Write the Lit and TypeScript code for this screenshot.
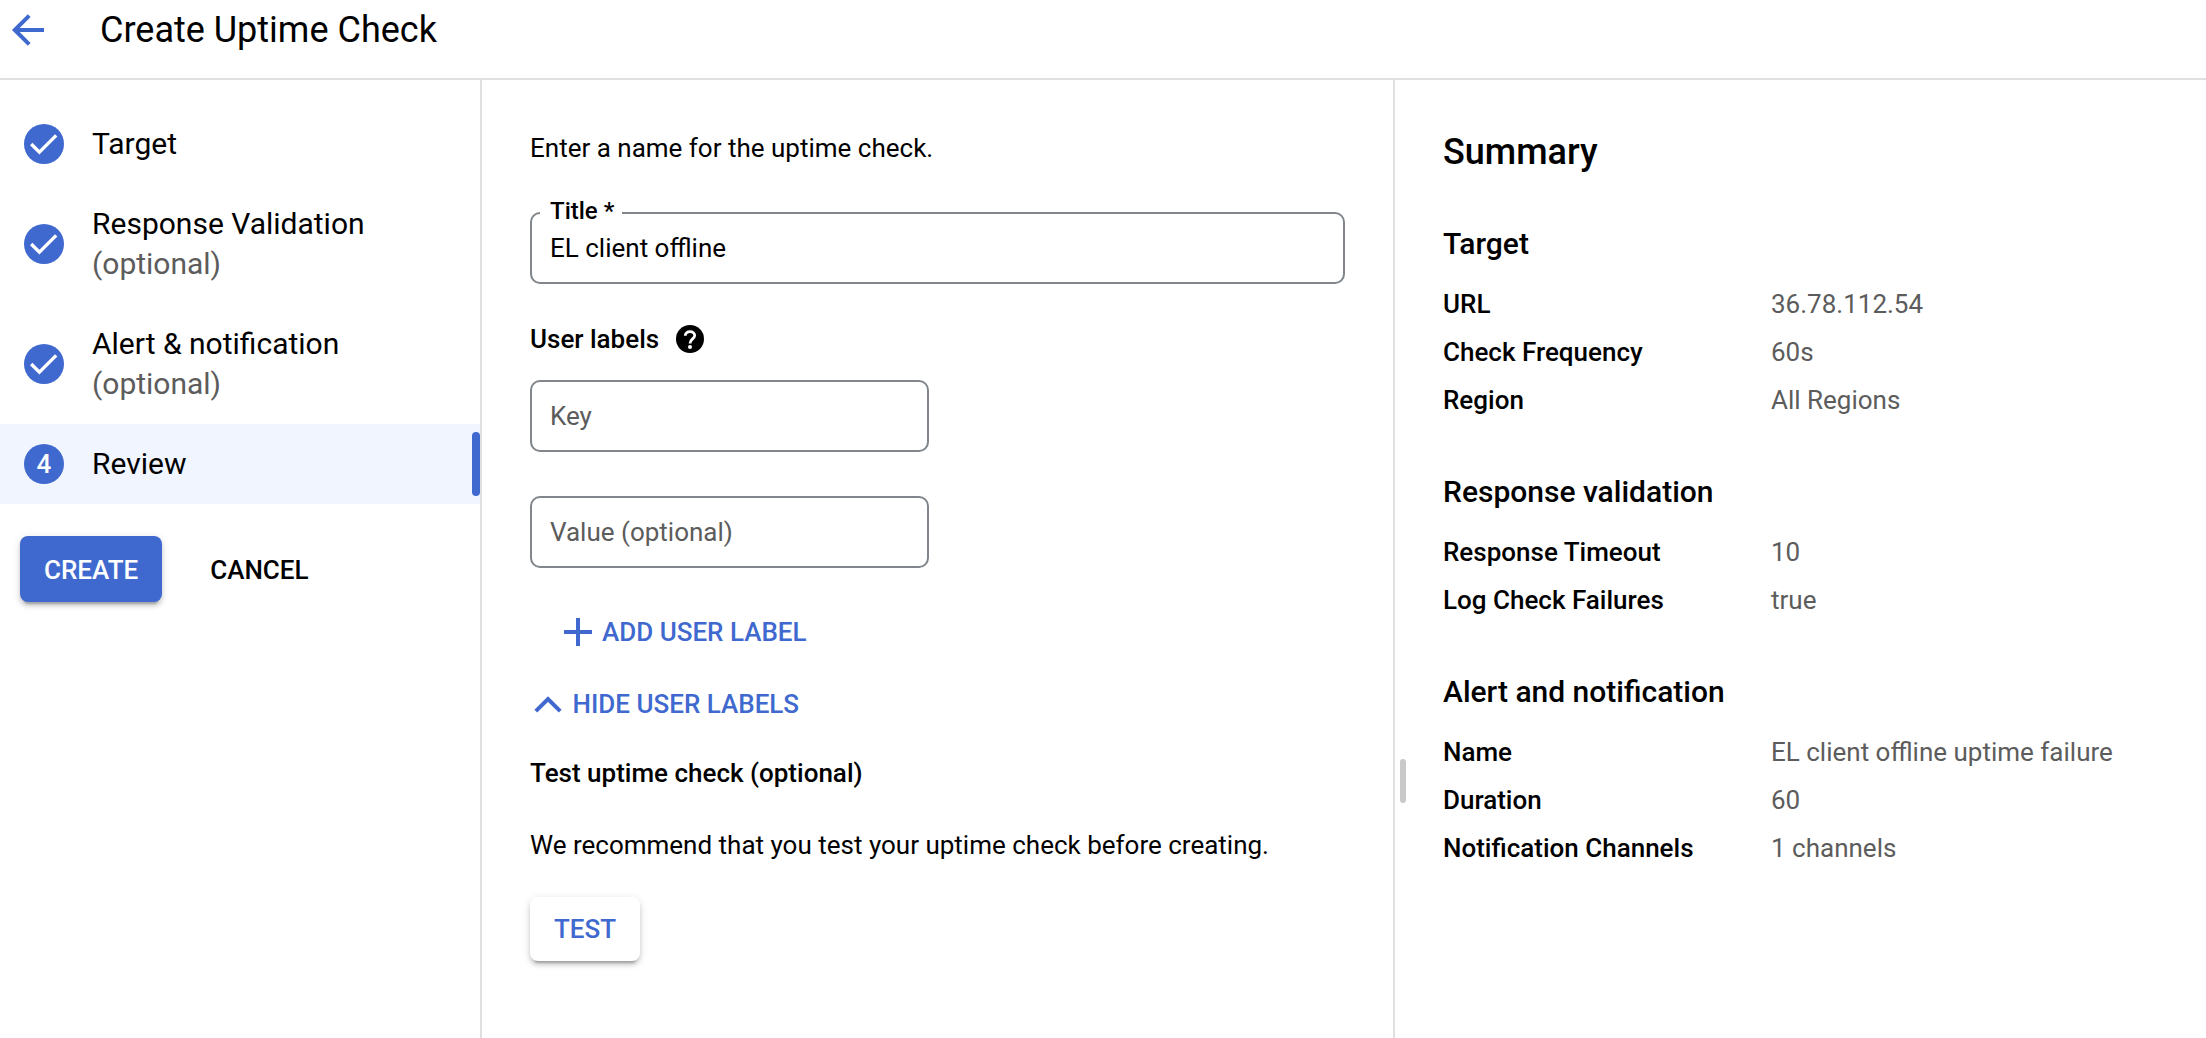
import { LitElement, html, css } from "lit";
import { customElement, property } from "lit/decorators.js";

const BLUE = "#3f69cf";

interface Step {
  label: string;
  optional?: boolean;
  done: boolean;
}

const steps: Step[] = [
  { label: "Target", done: true },
  { label: "Response Validation", optional: true, done: true },
  { label: "Alert & notification", optional: true, done: true },
  { label: "Review", done: false },
];

const sections: { heading: string; rows: [string, string][] }[] = [
  {
    heading: "Target",
    rows: [
      ["URL", "36.78.112.54"],
      ["Check Frequency", "60s"],
      ["Region", "All Regions"],
    ],
  },
  {
    heading: "Response validation",
    rows: [
      ["Response Timeout", "10"],
      ["Log Check Failures", "true"],
    ],
  },
  {
    heading: "Alert and notification",
    rows: [
      ["Name", "EL client offline uptime failure"],
      ["Duration", "60"],
      ["Notification Channels", "1 channels"],
    ],
  },
];

@customElement("outlined-field")
class OutlinedField extends LitElement {
  @property() label = "";
  @property() value = "";
  @property() placeholder = "";

  static styles = css`
    :host {
      display: block;
    }
    .box {
      box-sizing: border-box;
      height: 72px;
      margin: 0;
      padding: 0 18px;
      border: 2px solid #80868b;
      border-radius: 10px;
      position: relative;
      display: flex;
      align-items: center;
      color: #000;
    }
    .label {
      position: absolute;
      left: 8px;
      top: -19px;
      padding: 0 8px 0 10px;
      background: #fff;
      font-size: 24px;
      line-height: 32px;
      font-weight: 500;
    }
    .hint {
      color: #5c5c5c;
    }
    .value {
      line-height: 36px;
    }
  `;

  render() {
    return html`<div class="box">
      ${this.label ? html`<span class="label">${this.label}</span>` : null}
      ${this.value
        ? html`<span class="value">${this.value}</span>`
        : html`<span class="hint">${this.placeholder}</span>`}
    </div>`;
  }
}

@customElement("app-root")
class AppRoot extends LitElement {
  static styles = css`
    :host {
      display: flex;
      flex-direction: column;
      height: 1038px;
      overflow: hidden;
      background: #fff;
      color: #000;
      font-family: Roboto, "Liberation Sans", sans-serif;
      font-size: 26px;
      line-height: 40px;
    }
    svg {
      display: block;
      flex: none;
    }
    .header {
      box-sizing: border-box;
      height: 80px;
      flex: none;
      border-bottom: 2px solid #e0e0e0;
      display: flex;
      align-items: flex-start;
      padding: 6px 4px;
      gap: 48px;
    }
    .title {
      margin: 0;
      font-size: 36px;
      line-height: 48px;
      font-weight: 400;
    }
    .body {
      flex: 1;
      display: grid;
      grid-template-columns: 482px 911px 1fr;
    }
    .side {
      border-right: 2px solid #e0e0e0;
      padding-top: 24px;
    }
    .step {
      display: flex;
      align-items: center;
      gap: 28px;
      padding: 20px 24px;
      font-size: 30px;
      position: relative;
    }
    .step.active {
      background: #f0f5ff;
    }
    .step.active::after {
      content: "";
      position: absolute;
      right: 0;
      top: 8px;
      bottom: 8px;
      width: 8px;
      border-radius: 4px;
      background: #3f69cf;
    }
    .num {
      width: 40px;
      height: 40px;
      border-radius: 50%;
      background: #3f69cf;
      color: #fff;
      font-size: 26px;
      font-weight: 500;
      text-align: center;
    }
    .opt {
      color: #5c5c5c;
    }
    .actions {
      display: flex;
      gap: 24px;
      padding: 32px 20px;
    }
    .btn {
      box-sizing: border-box;
      height: 66px;
      padding: 0 24px;
      border-radius: 8px;
      font-weight: 500;
      display: flex;
      align-items: center;
    }
    .actions .btn {
      padding-top: 2px;
    }
    .primary {
      background: #3f69cf;
      color: #fff;
      box-shadow: 0 6px 2px -4px rgba(0, 0, 0, 0.2), 0 4px 4px rgba(0, 0, 0, 0.14), 0 2px 10px rgba(0, 0, 0, 0.12);
    }
    .raised {
      width: fit-content;
      height: 64px;
      margin-top: 32px;
      color: #3f69cf;
      background: #fff;
      box-shadow: 0 6px 2px -4px rgba(0, 0, 0, 0.2), 0 4px 4px rgba(0, 0, 0, 0.14), 0 2px 10px rgba(0, 0, 0, 0.12);
    }
    .main {
      padding: 48px 48px 0;
      display: flex;
      flex-direction: column;
    }
    .text {
      margin: 0;
    }
    .name-field {
      margin-top: 44px;
    }
    .labels {
      display: flex;
      align-items: center;
      gap: 17px;
      margin-top: 35px;
      font-weight: 500;
    }
    .key {
      width: 399px;
      margin-top: 21px;
    }
    .val {
      width: 399px;
      margin-top: 44px;
    }
    .link {
      display: flex;
      align-items: center;
      color: #3f69cf;
      font-weight: 500;
    }
    .add {
      margin-top: 44px;
      padding-left: 34px;
      gap: 10px;
    }
    .hide {
      margin-top: 32px;
      padding-left: 4px;
      gap: 10.5px;
    }
    .test-heading {
      margin: 29px 0 32px;
      font-size: 26px;
      font-weight: 500;
    }
    .summary {
      border-left: 2px solid #e0e0e0;
      padding: 48px 48px 0;
      position: relative;
    }
    .summary-title {
      margin: 0;
      font-size: 36px;
      line-height: 48px;
      font-weight: 500;
    }
    .section {
      margin-top: 48px;
    }
    .heading {
      margin: 0 0 16px;
      font-size: 30px;
      line-height: 40px;
      font-weight: 500;
    }
    .row {
      display: grid;
      grid-template-columns: 328px 1fr;
      line-height: 48px;
    }
    .key-name {
      font-weight: 500;
    }
    .key-value {
      color: #5c5c5c;
    }
    .handle {
      position: absolute;
      left: 5px;
      top: 679px;
      width: 6px;
      height: 44px;
      border-radius: 3px;
      background: #c9c9c9;
    }
  `;

  private renderStep(step: Step, index: number) {
    return html`<div class="step ${step.done ? "" : "active"}">
      ${step.done
        ? html`<svg width="40" height="40" viewBox="0 0 40 40">
            <circle cx="20" cy="20" r="20" fill=${BLUE} />
            <path d="M7.2 20L15.4 28.2L32.2 11.4" fill="none" stroke="#fff" stroke-width="3.4" />
          </svg>`
        : html`<span class="num">${index + 1}</span>`}
      <div>
        <div>${step.label}</div>
        ${step.optional ? html`<div class="opt">(optional)</div>` : null}
      </div>
    </div>`;
  }

  render() {
    return html`
      <header class="header">
        <svg width="48" height="48" viewBox="0 0 48 48">
          <path d="M40 24H11M25.2 9.6L10.8 24L25.2 38.4" fill="none" stroke=${BLUE} stroke-width="4" />
        </svg>
        <h1 class="title">Create Uptime Check</h1>
      </header>
      <div class="body">
        <nav class="side">
          ${steps.map((s, i) => this.renderStep(s, i))}
          <div class="actions">
            <div class="btn primary">CREATE</div>
            <div class="btn">CANCEL</div>
          </div>
        </nav>
        <main class="main">
          <p class="text">Enter a name for the uptime check.</p>
          <outlined-field class="name-field" label="Title *" value="EL client offline"></outlined-field>
          <div class="labels">
            User labels
            <svg width="28" height="28" viewBox="0 0 28 28">
              <circle cx="14" cy="14" r="14" />
              <path
                d="M9.3 10.8C9.3 8.2 11.3 6.6 14 6.6C16.7 6.6 18.7 8.2 18.7 10.6C18.7 13.8 14 14.2 14 18.4"
                fill="none"
                stroke="#fff"
                stroke-width="2.8"
              />
              <circle cx="14" cy="22" r="2" fill="#fff" />
            </svg>
          </div>
          <outlined-field class="key" placeholder="Key"></outlined-field>
          <outlined-field class="val" placeholder="Value (optional)"></outlined-field>
          <div class="link add">
            <svg width="28" height="28" viewBox="0 0 28 28">
              <path d="M14 0V28M0 14H28" stroke=${BLUE} stroke-width="4" />
            </svg>
            ADD USER LABEL
          </div>
          <div class="link hide">
            <svg width="28" height="28" viewBox="0 0 28 28">
              <path d="M1.8 21.2L14 9L26.2 21.2" fill="none" stroke=${BLUE} stroke-width="4" />
            </svg>
            HIDE USER LABELS
          </div>
          <h2 class="test-heading">Test uptime check (optional)</h2>
          <p class="text">We recommend that you test your uptime check before creating.</p>
          <div class="btn raised">TEST</div>
        </main>
        <aside class="summary">
          <span class="handle"></span>
          <h2 class="summary-title">Summary</h2>
          ${sections.map(
            (s) => html`<section class="section">
              <h3 class="heading">${s.heading}</h3>
              ${s.rows.map(
                ([k, v]) => html`<div class="row">
                  <span class="key-name">${k}</span><span class="key-value">${v}</span>
                </div>`
              )}
            </section>`
          )}
        </aside>
      </div>
    `;
  }
}
